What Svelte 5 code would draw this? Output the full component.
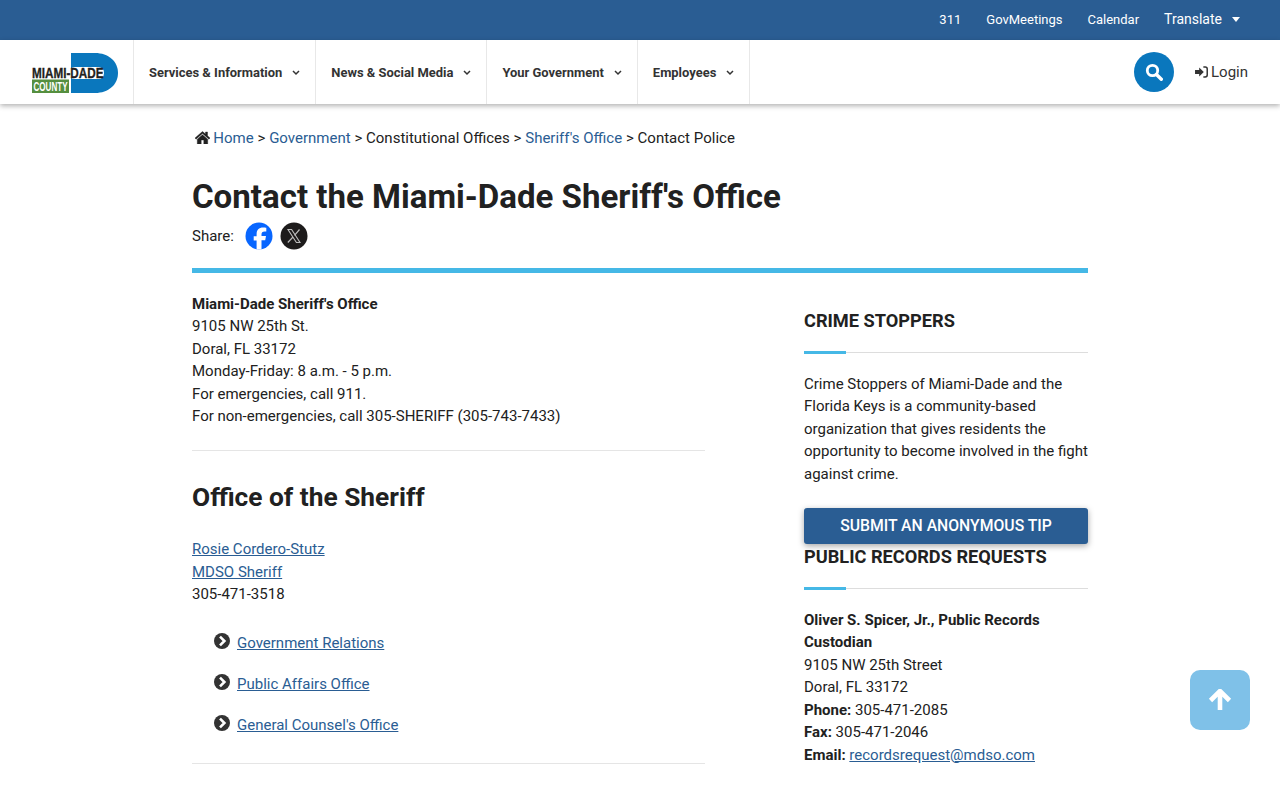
<script lang="ts">
  const topLinks = ['311', 'GovMeetings', 'Calendar'];
  const navItems = ['Services & Information', 'News & Social Media', 'Your Government', 'Employees'];
  const officeLinks = ['Government Relations', 'Public Affairs Office', "General Counsel's Office"];
</script>

<header>
  <div class="topbar">
    {#each topLinks as link}
      <a href="#top">{link}</a>
    {/each}
    <a href="#top" class="translate">Translate <span class="caret"></span></a>
  </div>
  <div class="navbar">
    <a href="#home" class="logo" aria-label="Miami-Dade County">
      <svg width="88" height="42" viewBox="0 0 88 42">
        <path d="M40 1H64C77.500 1 87 9.500 87 21S77.500 41 64 41H40Z" fill="#0a77bd" />
        <rect x="38" y="15" width="35" height="12" rx="5.500" fill="#fff" />
        <text x="1" y="26" class="logo-main" textLength="71.500" lengthAdjust="spacingAndGlyphs">MIAMI-DADE</text>
        <rect x="1" y="27.500" width="37" height="13.500" fill="#558f3f" />
        <text x="2.500" y="39" class="logo-sub" textLength="34" lengthAdjust="spacingAndGlyphs">COUNTY</text>
      </svg>
    </a>
    <nav>
      {#each navItems as item}
        <a href="#nav" class="nav-item">
          {item}
          <svg class="chev" width="8" height="6" viewBox="0 0 8 6"><path d="M1 1l3 3 3-3" fill="none" stroke="#333" stroke-width="1.500" /></svg>
        </a>
      {/each}
    </nav>
    <div class="nav-right">
      <button class="search" aria-label="Search">
        <svg width="18" height="18" viewBox="0 0 18 18"><circle cx="7.500" cy="7.500" r="5.200" fill="none" stroke="#fff" stroke-width="2.800" /><path d="M11.500 11.500l4.800 4.800" stroke="#fff" stroke-width="3.400" stroke-linecap="round" /></svg>
      </button>
      <a href="#login" class="login">
        <svg width="13" height="12" viewBox="0 0 14 13"><path d="M0 4.200h4.500V1.500l5 5-5 5V8.800H0Z" fill="#333" /><path d="M9 1.200h2c1.500 0 2.200.8 2.200 2v6.600c0 1.200-.7 2-2.200 2H9" fill="none" stroke="#333" stroke-width="1.600" /></svg>
        Login
      </a>
    </div>
  </div>
</header>

<main>
  <div class="crumbs">
    <svg width="15" height="13" viewBox="0 0 15 13"><path d="M7.500 0.500L0 7l1 1.200L7.500 2.600 14 8.200 15 7 12.500 4.800V1h-2v2.100ZM2.300 8.300V13h3.900V9h2.600v4h3.900V8.300L7.500 3.800Z" fill="#212121" stroke="#212121" stroke-width="0.400" /></svg>
    <a href="#home">Home</a> &gt; <a href="#gov">Government</a> &gt; Constitutional Offices &gt; <a href="#so">Sheriff's Office</a> &gt; Contact Police
  </div>

  <h1>Contact the Miami-Dade Sheriff's Office</h1>

  <div class="share">
    <span>Share:</span>
    <svg class="fb" width="28" height="28" viewBox="0 0 28 28" role="img" aria-label="Facebook">
      <circle cx="14" cy="14" r="13.500" fill="#0866ff" />
      <path d="M11.600 27.500V18.400H8.700V14.200h2.900v-1.800c0-4.700 2.100-6.900 6.700-6.900.9 0 2.400.2 3 .3v3.800c-.3 0-.9-.1-1.600-.1-2.300 0-3.200.9-3.200 3.100v1.500h4.500l-.8 4.200h-3.700v9.200Z" fill="#fff" />
    </svg>
    <svg width="28" height="28" viewBox="0 0 28 28" role="img" aria-label="X">
      <circle cx="14" cy="14" r="13.500" fill="#1d1b1b" />
      <path d="M8 7.500h3.600l8.400 13h-3.600Z" fill="none" stroke="#bbb" stroke-width="1.100" />
      <path d="M19.500 7.500l-5 5.800M13 15l-5.200 5.500" fill="none" stroke="#bbb" stroke-width="1.200" />
    </svg>
  </div>

  <div class="rule"></div>

  <div class="columns">
    <section class="left">
      <p>
        <strong>Miami-Dade Sheriff's Office</strong><br />
        9105 NW 25th St.<br />
        Doral, FL 33172<br />
        Monday-Friday: 8 a.m. - 5 p.m.<br />
        For emergencies, call 911.<br />
        For non-emergencies, call 305-SHERIFF (305-743-7433)
      </p>
      <hr />
      <h2>Office of the Sheriff</h2>
      <p>
        <a href="#sheriff">Rosie Cordero-Stutz</a><br />
        <a href="#sheriff">MDSO Sheriff</a><br />
        305-471-3518
      </p>
      <ul>
        {#each officeLinks as link}
          <li>
            <svg width="16" height="16" viewBox="0 0 16 16"><circle cx="8" cy="8" r="8" fill="#333" /><path d="M6 3.600L10.400 8 6 12.400" fill="none" stroke="#fff" stroke-width="2.600" /></svg>
            <a href="#office">{link}</a>
          </li>
        {/each}
      </ul>
      <hr class="second" />
      <h2>Undersheriff's Office</h2>
    </section>

    <aside>
      <h3>CRIME STOPPERS</h3>
      <div class="h3-line"></div>
      <p>Crime Stoppers of Miami-Dade and the Florida Keys is a community-based organization that gives residents the opportunity to become involved in the fight against crime.</p>
      <a href="#tip" class="tip">SUBMIT AN ANONYMOUS TIP</a>
      <h3 class="records">PUBLIC RECORDS REQUESTS</h3>
      <div class="h3-line"></div>
      <p>
        <strong>Oliver S. Spicer, Jr., Public Records Custodian</strong><br />
        9105 NW 25th Street<br />
        Doral, FL 33172<br />
        <strong>Phone:</strong> 305-471-2085<br />
        <strong>Fax:</strong> 305-471-2046<br />
        <strong>Email:</strong> <a href="#mail">recordsrequest@mdso.com</a>
      </p>
    </aside>
  </div>
</main>

<a href="#top" class="to-top" aria-label="Back to top">
  <svg width="24" height="22" viewBox="0 0 24 22"><path d="M2.500 11.500L12 2l9.500 9.500M12 3v18" fill="none" stroke="#fff" stroke-width="4.600" /></svg>
</a>

<style>
  :global(body) {
    font-family: Roboto, "Liberation Sans", sans-serif;
    font-size: 15px;
    line-height: 22.5px;
    color: #212121;
    background: #fff;
    overflow: hidden;
  }

  a {
    color: #2a5d93;
  }

  .topbar {
    height: 40px;
    background: #2a5d93;
    display: flex;
    justify-content: flex-end;
    align-items: center;
    gap: 25px;
    padding-right: 40px;
    box-sizing: border-box;
  }

  .topbar a {
    color: #fff;
    font-size: 13px;
    text-decoration: none;
  }

  .topbar .translate {
    display: flex;
    align-items: center;
    gap: 10px;
    font-size: 14px;
    padding-bottom: 1px;
  }

  .caret {
    border: 4.500px solid transparent;
    border-top: 5px solid #fff;
    border-bottom: 0;
  }

  .navbar {
    height: 64px;
    display: flex;
    align-items: stretch;
    background: #fff;
    box-shadow: 0 2px 5px rgba(0, 0, 0, 0.3);
    position: relative;
  }

  .logo {
    width: 133px;
    box-sizing: border-box;
    padding: 2px 0 0 31px;
    display: flex;
    align-items: center;
  }

  .logo-main {
    font: 700 14px "Liberation Sans", sans-serif;
    fill: #231f20;
    stroke: #231f20;
    stroke-width: 0.300px;
  }

  .logo-sub {
    font: 700 13px "Liberation Sans", sans-serif;
    fill: #fff;
  }

  nav {
    display: flex;
    border-left: 1px solid #e8e8e8;
  }

  .nav-item {
    display: flex;
    align-items: center;
    gap: 10px;
    padding: 2px 15px 0;
    font-size: 12.950px;
    font-weight: 700;
    color: #333;
    text-decoration: none;
    border-right: 1px solid #e8e8e8;
  }

  .nav-right {
    margin-left: auto;
    display: flex;
    align-items: center;
    gap: 21px;
    padding-right: 32px;
  }

  .search {
    width: 40px;
    height: 40px;
    border: 0;
    border-radius: 50%;
    background: #0a77bd;
    display: flex;
    align-items: center;
    justify-content: center;
    padding: 0;
  }

  .login {
    display: flex;
    align-items: center;
    gap: 3px;
    font-size: 15px;
    color: #333;
    text-decoration: none;
  }

  main {
    width: 896px;
    margin: 0 auto;
  }

  .crumbs {
    padding: 23px 0 0 3px;
    height: 22.500px;
    word-spacing: 0.080px;
  }

  .crumbs svg {
    vertical-align: -1px;
    margin-right: -0.500px;
  }

  .crumbs a {
    text-decoration: none;
  }

  h1 {
    margin: 25px 0 0;
    font-size: 33.050px;
    line-height: 44px;
    font-weight: 700;
  }

  .share {
    display: flex;
    align-items: center;
    height: 28px;
    margin-top: 3.500px;
    gap: 7px;
  }

  .share span {
    margin-right: 4px;
  }

  .rule {
    height: 5px;
    background: #45b8e6;
    margin-top: 17.500px;
  }

  .columns {
    display: flex;
    justify-content: space-between;
    align-items: flex-start;
    padding-top: 20px;
  }

  .left {
    width: 513px;
  }

  p {
    margin: 0;
  }

  hr {
    border: 0;
    border-top: 1px solid #e5e5e5;
    margin: 22px 0 0;
  }

  h2 {
    margin: 28px 0 23.500px;
    font-size: 26.300px;
    line-height: 36px;
    font-weight: 700;
  }

  ul {
    list-style: none;
    margin: 26.500px 0 0;
    padding: 0 0 0 22px;
  }

  li {
    display: flex;
    gap: 7px;
    height: 41px;
  }

  li svg {
    margin-top: 1px;
  }

  .second {
    margin-top: 8px;
  }

  aside {
    width: 284px;
    padding-top: 16px;
  }

  h3 {
    margin: 0;
    font-size: 18.200px;
    line-height: 24px;
    font-weight: 700;
  }

  .h3-line {
    height: 1px;
    background: #ddd;
    margin: 19px 0 20px;
    position: relative;
  }

  .h3-line::before {
    content: '';
    position: absolute;
    left: 0;
    top: -1px;
    width: 42px;
    height: 3px;
    background: #45b8e6;
  }

  .tip {
    display: block;
    margin-top: 23px;
    height: 36px;
    line-height: 36px;
    background: #2a5d93;
    color: #fff;
    text-align: center;
    font-size: 15.750px;
    font-weight: 500;
    border-radius: 3px;
    box-shadow: 0 2px 6px rgba(0, 0, 0, 0.35);
    text-decoration: none;
  }

  .records {
    margin-top: 0.500px;
  }

  .to-top {
    position: fixed;
    left: 1190px;
    top: 670px;
    width: 60px;
    height: 60px;
    border-radius: 10px;
    background: #7fc1e8;
    display: flex;
    align-items: center;
    justify-content: center;
  }
</style>
